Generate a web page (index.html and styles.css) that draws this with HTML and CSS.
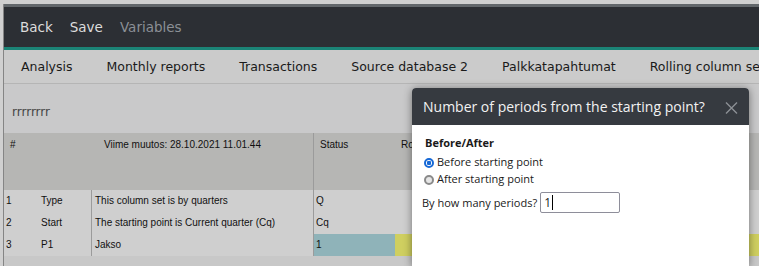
FILE: index.html
```html
<!DOCTYPE html>
<html lang="en">
<head>
	<meta charset="UTF-8" />
	<title>Column set editor</title>
	<link rel="stylesheet" href="styles.css">
</head>
<body>
	<div class="frame">
		<header class="topbar">
			<a class="topbar__link">Back</a>
			<a class="topbar__link">Save</a>
			<a class="topbar__link topbar__link--disabled">Variables</a>
		</header>
		<nav class="tabs">
			<span class="tabs__item">Analysis</span>
			<span class="tabs__item">Monthly reports</span>
			<span class="tabs__item">Transactions</span>
			<span class="tabs__item">Source database 2</span>
			<span class="tabs__item">Palkkatapahtumat</span>
			<span class="tabs__item">Rolling column set</span>
		</nav>
		<div class="toolbar">rrrrrrrr</div>
		<section class="grid">
			<div class="grid__head">
				<div class="grid__hcell">#</div>
				<div class="grid__hcell grid__hcell--info">Viime muutos: 28.10.2021 11.01.44</div>
				<div class="grid__hcell">Status</div>
				<div class="grid__hcell grid__hcell--clip">Rolling</div>
			</div>
			<div class="grid__row">
				<div class="grid__cell">1</div>
				<div class="grid__cell grid__cell--line">Type</div>
				<div class="grid__cell grid__cell--line">This column set is by quarters</div>
				<div class="grid__cell">Q</div>
				<div class="grid__cell"></div>
			</div>
			<div class="grid__row">
				<div class="grid__cell">2</div>
				<div class="grid__cell grid__cell--line">Start</div>
				<div class="grid__cell grid__cell--line">The starting point is Current quarter (Cq)</div>
				<div class="grid__cell">Cq</div>
				<div class="grid__cell"></div>
			</div>
			<div class="grid__row">
				<div class="grid__cell">3</div>
				<div class="grid__cell grid__cell--line">P1</div>
				<div class="grid__cell grid__cell--line">Jakso</div>
				<div class="grid__cell grid__cell--blue">1</div>
				<div class="grid__cell grid__cell--yellow"></div>
			</div>
		</section>
	</div>

	<div class="dialog">
		<div class="dialog__header">
			<span class="dialog__title">Number of periods from the starting point?</span>
			<svg class="dialog__close" width="13" height="12" viewBox="0 0 13 12">
				<path d="M1 0.5 L12 11.5 M12 0.5 L1 11.5" stroke="#8c9095" stroke-width="1.4" fill="none" />
			</svg>
		</div>
		<div class="dialog__body">
			<p class="dialog__label">Before/After</p>
			<div class="radio">
				<span class="radio__dot radio__dot--checked"></span>Before starting point
			</div>
			<div class="radio">
				<span class="radio__dot"></span>After starting point
			</div>
			<div class="periods">
				<span>By how many periods?</span>
				<div class="periods__input">1<span class="periods__caret"></span></div>
			</div>
		</div>
	</div>
</body>
</html>
```

FILE: styles.css
```css
:root{
	--dark: #2c2f34;
	--teal: #1b8476;
	--line: #9b9b9b;
}

*{
	box-sizing: border-box;
}

body{
	margin: 0;
	height: 266px;
	overflow: hidden;
	background-color: #d0d0d0;
}

.frame{
	margin: 4px 0 0 3px;
	height: 262px;
	border-left: 1px solid #858585;
	background-color: #c8c8c8;
	overflow: hidden;
}

/* top bar */

.topbar{
	display: flex;
	gap: 17px;
	height: 46px;
	padding-left: 16px;
	align-items: center;
	background-color: var(--dark);
	border-top: 3px solid #62676b;
	border-bottom: 3px solid var(--teal);
	font-family: "DejaVu Sans", sans-serif;
	font-size: 13.5px;
}

.topbar__link{
	color: #dcdcdc;
}

.topbar__link--disabled{
	color: #8b9096;
}

/* tabs */

.tabs{
	display: flex;
	height: 34px;
	align-items: center;
	white-space: nowrap;
	background-color: #cbcbcb;
	border-bottom: 1px solid #b5b5b5;
	font-family: "DejaVu Sans", sans-serif;
	font-size: 12.5px;
	color: #1a1a1a;
}

.tabs__item{
	padding: 0 17px 1px;
}

/* toolbar */

.toolbar{
	height: 49px;
	padding: 21px 0 0 8px;
	background-color: #c9c9ca;
	font-family: "DejaVu Sans", sans-serif;
	font-size: 12px;
	color: #444;
}

/* grid */

.grid{
	font-family: "Liberation Sans", sans-serif;
	font-size: 10px;
	color: #111;
}

.grid__head{
	display: grid;
	grid-template-columns: 88px 222px 81px 1fr;
	height: 57px;
	background-color: #b6b6b4;
}

.grid__hcell{
	padding: 5px 0 0 6px;
	line-height: 14px;
}

.grid__hcell--info{
	padding-left: 12px;
	border-right: 1px solid var(--line);
}

/* only the start of this header shows beside the dialog */
.grid__hcell--clip{
	max-width: 17px;
	overflow: hidden;
	white-space: nowrap;
}

.grid__row{
	display: grid;
	grid-template-columns: 33px 55px 222px 81px 1fr;
	height: 22px;
	background-color: #cfcfcf;
}

.grid__cell{
	padding: 0 0 1px 2px;
	line-height: 21px;
	white-space: nowrap;
}

.grid__cell:nth-child(2){
	padding-left: 4px;
}

.grid__cell:nth-child(3){
	padding-left: 3px;
}

.grid__cell--line{
	border-right: 1px solid var(--line);
}

.grid__cell--blue{
	background-color: #8fb3b9;
}

.grid__cell--yellow{
	background-color: #cfcf60;
}

/* dialog */

.dialog{
	position: absolute;
	left: 412px;
	top: 88px;
	width: 337px;
	height: 178px;
	background-color: #fff;
	border-radius: 4px 4px 0 0;
	box-shadow: 0 1px 9px rgba(0, 0, 0, .45);
	font-family: "Open Sans", sans-serif;
}

.dialog__header{
	display: flex;
	align-items: center;
	justify-content: space-between;
	height: 37px;
	padding: 0 11px 0 11px;
	background-color: #363a40;
	border-radius: 4px 4px 0 0;
}

.dialog__title{
	color: #f2f2f2;
	font-size: 14px;
	padding-bottom: 1px;
}

.dialog__close{
	margin-top: 3px;
}

.dialog__body{
	padding: 9px 10px 0 10px;
	font-size: 11px;
	color: #1a1a1a;
}

.dialog__label{
	margin: 0 0 2px 3px;
	font-weight: bold;
	line-height: 17px;
}

.radio{
	display: flex;
	align-items: center;
	gap: 3px;
	margin-left: 2px;
	line-height: 17px;
}

.radio__dot{
	width: 10px;
	height: 10px;
	margin-top: 2px;
	border-radius: 50%;
	border: 2px solid #8a8a8a;
	background-color: #e6e6e6;
}

.radio__dot--checked{
	border-color: #1769d6;
	background: radial-gradient(circle, #1769d6 0 2px, #fff 2.5px);
}

.periods{
	display: flex;
	align-items: center;
	gap: 3px;
	margin-top: 5px;
}

.periods__input{
	display: flex;
	align-items: center;
	width: 80px;
	height: 21px;
	padding-left: 3px;
	border: 1px solid #8e8e9a;
	border-radius: 2px;
	font-size: 12px;
}

.periods__caret{
	width: 1px;
	height: 15px;
	margin-left: 1px;
	background-color: #000;
}
```
